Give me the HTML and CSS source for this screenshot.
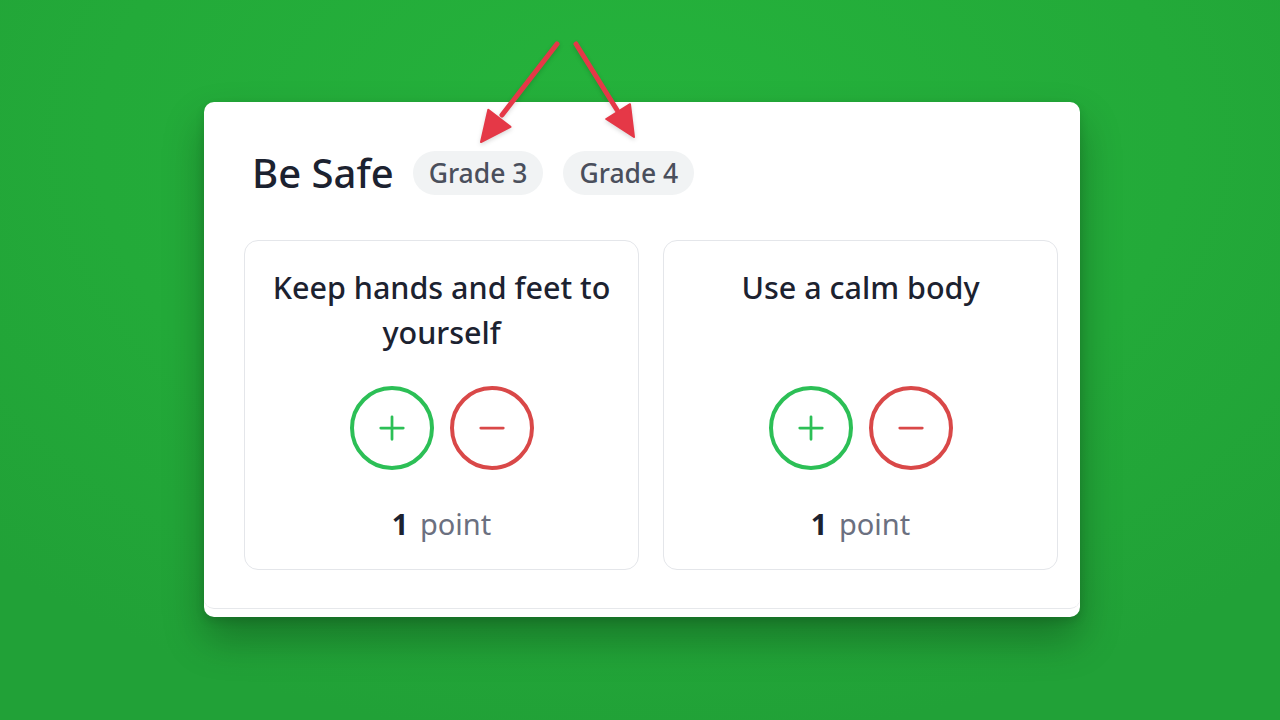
FILE: index.html
```html
<!DOCTYPE html>
<html lang="en">
<head>
<meta charset="utf-8">
<title>Be Safe</title>
<link rel="stylesheet" href="styles.css">
</head>
<body>
<div class="stage">
  <div class="panel">
    <div class="panel-body">
      <div class="header">
        <h1 class="title">Be Safe</h1>
        <span class="pill">Grade 3</span>
        <span class="pill">Grade 4</span>
      </div>
      <div class="cards">
        <div class="card">
          <div class="card-title">Keep hands and feet to yourself</div>
          <div class="actions">
            <button class="btn btn-plus" aria-label="add point">
              <svg viewBox="0 0 24 24" width="30" height="30"><path d="M12 3v18M3 12h18" stroke="#2cbf56" stroke-width="2.2" stroke-linecap="round" fill="none"/></svg>
            </button>
            <button class="btn btn-minus" aria-label="remove point">
              <svg viewBox="0 0 24 24" width="30" height="30"><path d="M3 12h18" stroke="#d94848" stroke-width="2.2" stroke-linecap="round" fill="none"/></svg>
            </button>
          </div>
          <div class="points"><strong>1</strong> point</div>
        </div>
        <div class="card">
          <div class="card-title">Use a calm body</div>
          <div class="actions">
            <button class="btn btn-plus" aria-label="add point">
              <svg viewBox="0 0 24 24" width="30" height="30"><path d="M12 3v18M3 12h18" stroke="#2cbf56" stroke-width="2.2" stroke-linecap="round" fill="none"/></svg>
            </button>
            <button class="btn btn-minus" aria-label="remove point">
              <svg viewBox="0 0 24 24" width="30" height="30"><path d="M3 12h18" stroke="#d94848" stroke-width="2.2" stroke-linecap="round" fill="none"/></svg>
            </button>
          </div>
          <div class="points"><strong>1</strong> point</div>
        </div>
      </div>
    </div>
  </div>
  <svg class="arrows" width="1280" height="720" viewBox="0 0 1280 720">
    <g stroke="#e53847" stroke-width="5" stroke-linecap="round" fill="#e53847">
      <line x1="557" y1="44" x2="502" y2="115"/>
      <polygon points="481,142 510.5,126.9 488.3,109.7" stroke-linejoin="round" stroke-width="2"/>
      <line x1="576" y1="44" x2="617" y2="110"/>
      <polygon points="634,137 630,104.2 606.2,119" stroke-linejoin="round" stroke-width="2"/>
    </g>
  </svg>
</div>
</body>
</html>
```
FILE: styles.css
```css
* { box-sizing: border-box; }
html, body {
  margin: 0;
  padding: 0;
}
body {
  width: 1280px;
  height: 720px;
  overflow: hidden;
  font-family: "Noto Sans", "Open Sans", sans-serif;
  background: #23ac3a;
}
.stage {
  position: relative;
  width: 1280px;
  height: 720px;
  padding: 102px 0 0 204px;
  background: radial-gradient(ellipse 900px 600px at 50% 20%, #25b33c 0%, #23aa39 60%, #21a137 100%);
}
.panel {
  width: 876px;
  height: 515px;
  background: #ffffff;
  border-radius: 10px;
  box-shadow: 0 22px 40px rgba(0, 0, 0, 0.28), 0 4px 10px rgba(0, 0, 0, 0.12);
  padding-bottom: 8px;
}
.panel-body {
  height: 507px;
  border-bottom: 1.5px solid #e6e8eb;
  border-radius: 10px;
  padding: 49px 0 0 40px;
}
.header {
  display: flex;
  align-items: center;
  gap: 20px;
  margin-left: 8px;
  height: 44px;
}
.title {
  margin: 0 -1px 0 0;
  font-size: 40px;
  font-weight: 500;
  color: #1c2230;
  line-height: 44px;
}
.pill {
  display: inline-flex;
  align-items: center;
  height: 44px;
  padding: 0 16px;
  border-radius: 22px;
  background: #f1f3f4;
  color: #4a4f5c;
  font-size: 26.5px;
  font-weight: 500;
}
.cards {
  display: flex;
  gap: 24px;
  margin-top: 45px;
}
.card {
  width: 395px;
  height: 330px;
  border: 1.5px solid #e4e6ea;
  border-radius: 14px;
  padding: 24px 16px 0;
  display: flex;
  flex-direction: column;
  align-items: center;
}
.card-title {
  font-size: 30.5px;
  font-weight: 500;
  line-height: 45px;
  height: 90px;
  color: #1c2230;
  text-align: center;
}
.actions {
  display: flex;
  gap: 16px;
  margin-top: 31px;
}
.btn {
  width: 84px;
  height: 84px;
  border-radius: 50%;
  background: #ffffff;
  display: flex;
  align-items: center;
  justify-content: center;
  padding: 0;
  cursor: pointer;
}
.btn-plus { border: 4px solid #2cbf56; }
.btn-minus { border: 4px solid #d94848; }
.points {
  margin-top: 34px;
  font-size: 29px;
  line-height: 40px;
  color: #6b7080;
}
.points strong {
  color: #1c2230;
  font-weight: 700;
  margin-right: 4px;
}
.arrows {
  position: absolute;
  left: 0;
  top: 0;
  pointer-events: none;
  filter: drop-shadow(0 2px 2px rgba(0, 0, 0, 0.15));
}
```
